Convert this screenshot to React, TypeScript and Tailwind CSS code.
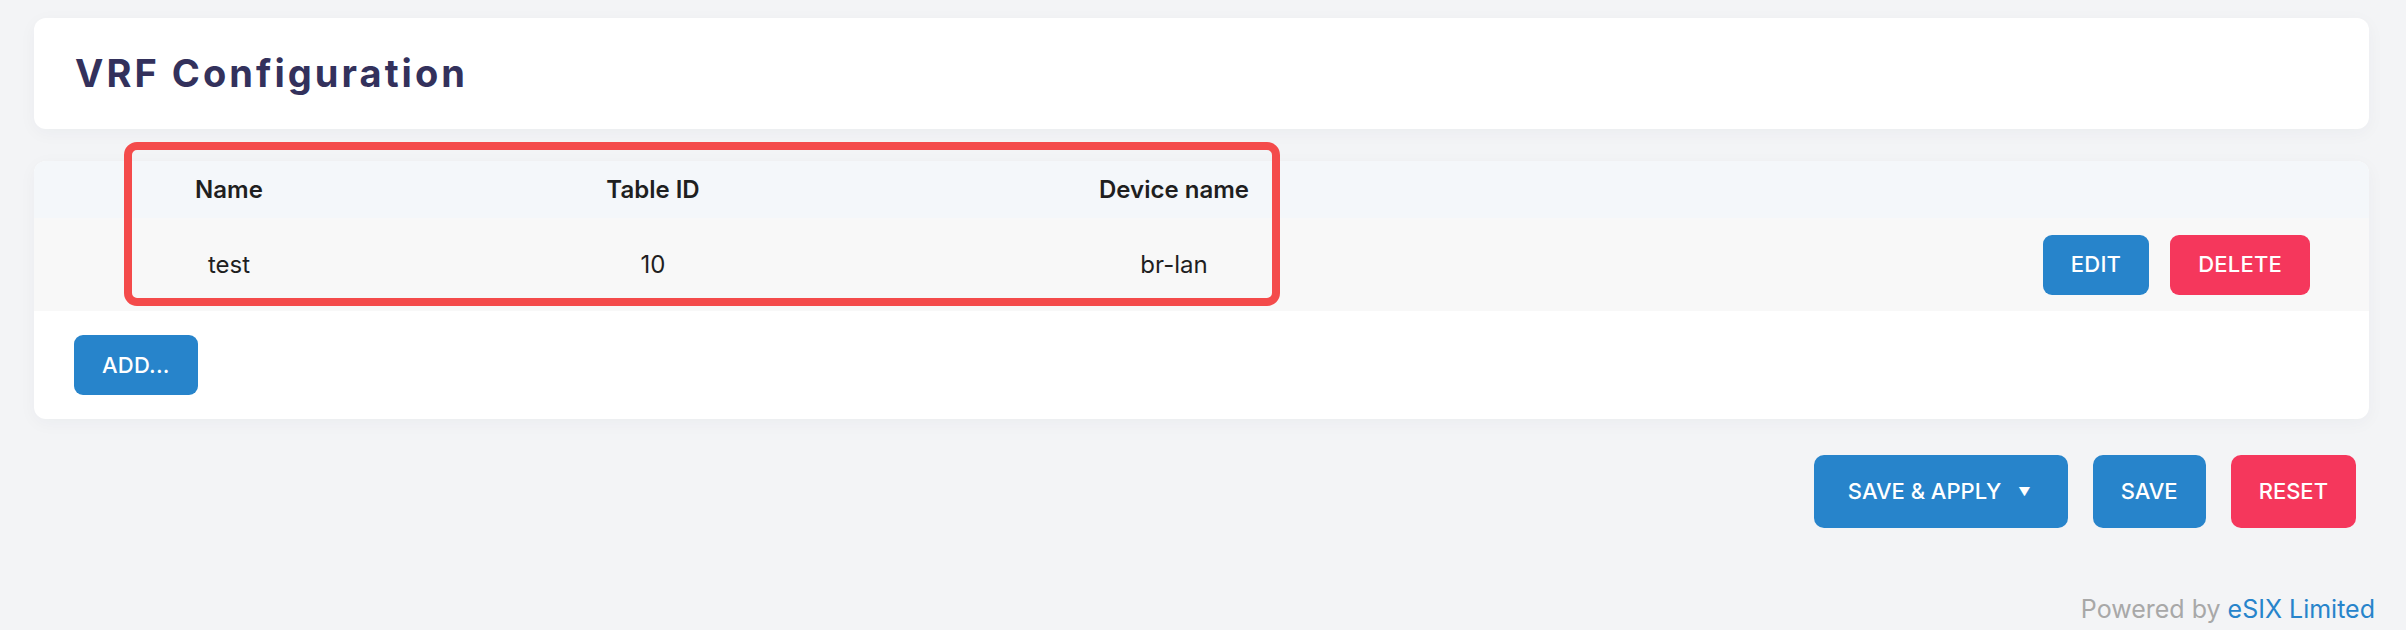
import React from "react";

const rows = [{ name: "test", table: "10", device: "br-lan" }];

const btn = "h-[60px] px-[28px] rounded-[9px] text-[22px] font-medium text-white tracking-[0.01em]";

export default function App() {
  return (
    <div className="min-h-[630px] bg-[#f3f4f6] pt-[18px] pl-[34px] pr-[37px] font-['Inter',_'Liberation_Sans',_sans-serif]">
      <div className="h-[111px] bg-white rounded-[12px] shadow-[0_4px_18px_rgba(30,40,80,0.04)] flex items-center px-[41px]">
        <h1 className="text-[38px] font-bold tracking-[0.08em] text-[#33315c]">VRF Configuration</h1>
      </div>

      <div className="relative mt-[32px] bg-white rounded-[12px] shadow-[0_4px_18px_rgba(30,40,80,0.04)] overflow-visible">
        <div className="grid grid-cols-[390px_458px_584px_1fr] h-[57px] items-center bg-[#f4f7fa] rounded-t-[12px] text-[24px] font-semibold text-[#1f1f1f]">
          <div className="text-center">Name</div>
          <div className="text-center">Table ID</div>
          <div className="text-center">Device name</div>
          <div />
        </div>
        {rows.map((r) => (
          <div key={r.name} className="grid grid-cols-[390px_458px_584px_1fr] h-[93px] items-center bg-[#f8f8f8] text-[24px] text-[#1f1f1f]">
            <div className="text-center">{r.name}</div>
            <div className="text-center">{r.table}</div>
            <div className="text-center">{r.device}</div>
            <div className="flex justify-end gap-[21px] pr-[59px]">
              <button className={`${btn} bg-[#2784cb]`}>EDIT</button>
              <button className={`${btn} bg-[#f5375c]`}>DELETE</button>
            </div>
          </div>
        ))}
        <div className="px-[40px] py-[24px]">
          <button className={`${btn} bg-[#2784cb]`}>ADD...</button>
        </div>

        <div className="absolute left-[90px] top-[-19px] w-[1156px] h-[164px] border-[8px] border-[#f44b4b] rounded-[13px] pointer-events-none" />
      </div>

      <div className="flex justify-end gap-[25px] mt-[36px] pr-[13px]">
        <button className="h-[73px] pl-[34px] pr-[37px] rounded-[10px] bg-[#2784cb] text-white text-[22px] font-medium flex items-center gap-[17px]">
          <span>SAVE &amp; APPLY</span>
          <span className="text-[12px]">▼</span>
        </button>
        <button className="h-[73px] px-[28px] rounded-[10px] bg-[#2784cb] text-white text-[22px] font-medium">SAVE</button>
        <button className="h-[73px] px-[28px] rounded-[10px] bg-[#f5375c] text-white text-[22px] font-medium">RESET</button>
      </div>

      <div className="flex justify-end mt-[69px] -mr-[6px] text-[25px] leading-none">
        <span className="text-[#a8a8a8]">Powered by&nbsp;</span>
        <span className="text-[#2784cb]">eSIX Limited</span>
      </div>
    </div>
  );
}
